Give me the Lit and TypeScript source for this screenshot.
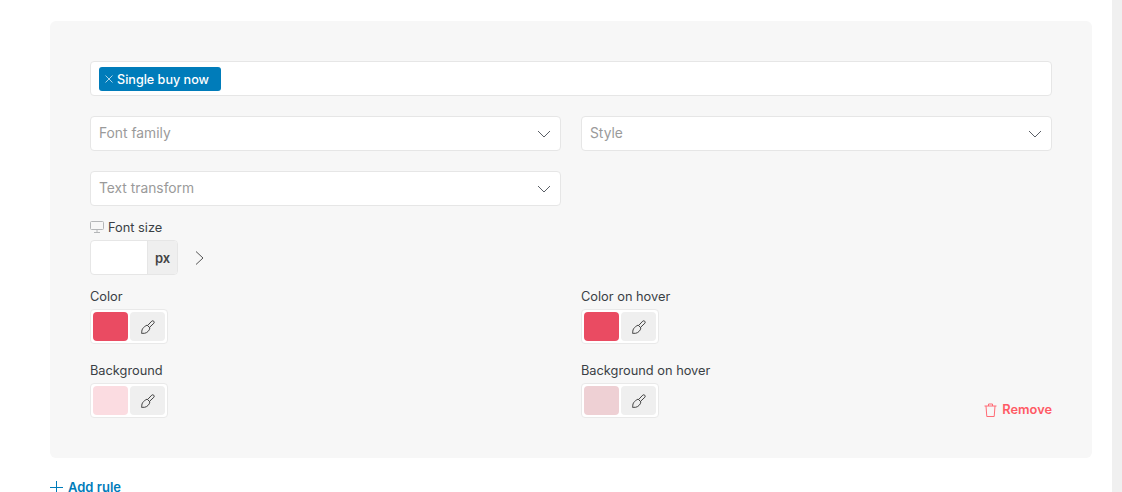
import { LitElement, html, css } from "lit";
import { customElement } from "lit/decorators.js";

const chevron = html`<svg class="chev" width="14" height="8" viewBox="0 0 14 8" fill="none"><path d="M1 1l6 6 6-6" stroke="#5a5f66" stroke-width="1"/></svg>`;
const brush = html`<svg width="16" height="16" viewBox="0 0 16 16" fill="none" stroke="#444" stroke-width="1"><path d="M7.600 6.500L11.800 2.100a1.500 1.500 0 0 1 2.100 2.100L9.500 8.400"/><path d="M7.100 6.100l2.800 2.800C9.600 11.500 7 14 4.500 14.300H1.500C2 12.800 1.500 11.500 2.600 9.700 3.500 8.300 5.500 6.800 7.100 6.100z"/></svg>`;

@customElement("app-root")
export class AppRoot extends LitElement {
  static styles = css`
    :host { display: block; width: 1122px; height: 492px; overflow: hidden; background: #fff; font-family: Inter, "Liberation Sans", sans-serif; font-size: 12.8px; color: #3a3f45; }
    .page { display: flex; height: 492px; }
    .main { flex: 1; padding: 21px 20px 0 50px; min-width: 0; }
    .track { width: 10px; background: #f0f0f0; }
    .panel { background: #f7f7f7; border-radius: 6px; padding: 40px; height: 437px; box-sizing: border-box; position: relative; }
    .field { height: 35px; box-sizing: border-box; background: #fff; border: 1px solid #e6e6e6; border-radius: 4px; display: flex; align-items: center; padding: 0 8px; }
    .tag { height: 24px; width: 122px; box-sizing: border-box; background: #007cba; color: #fff; border-radius: 3px; display: flex; align-items: center; gap: 4px; padding-left: 6px; font-weight: 500; font-size: 12.6px; white-space: nowrap; }
    .tag span { line-height: 18px; padding-top: 2px; }
    .grid { display: grid; grid-template-columns: 471px 471px; column-gap: 20px; row-gap: 20px; margin-top: 20px; }
    .select { justify-content: space-between; color: #9a9a9a; font-size: 13.8px; padding-right: 9px; }
    .select span { margin-top: -2px; }
    .size-label { display: flex; align-items: flex-start; gap: 4px; height: 14px; margin-top: 14px; line-height: 16px; }
    .size-label svg { margin-top: 1px; }
    .size-row { display: flex; align-items: center; margin-top: 6px; }
    .unit-input { width: 88px; height: 35px; box-sizing: border-box; display: flex; border: 1px solid #e6e6e6; border-radius: 4px; overflow: hidden; background: #fff; }
    .blank { flex: 1; }
    .unit { width: 30px; background: #efefef; border-left: 1px solid #e6e6e6; display: flex; align-items: center; justify-content: center; font-weight: 600; font-size: 13px; color: #444; box-sizing: border-box; }
    .next { margin-left: 17px; display: block; }
    .colors { display: grid; grid-template-columns: 471px 471px; column-gap: 20px; row-gap: 19px; margin-top: 14px; }
    .label { line-height: 16px; height: 14px; }
    .picker { margin-top: 6px; width: 78px; height: 35px; box-sizing: border-box; background: #fff; border: 1px solid #e9e9e9; border-radius: 4px; padding: 2px; display: flex; gap: 2px; }
    .swatch { width: 35px; border-radius: 4px; }
    .brush { width: 35px; border-radius: 4px; background: #efefef; display: flex; align-items: center; justify-content: center; }
    .remove { position: absolute; right: 40px; bottom: 40px; display: flex; align-items: center; gap: 5px; color: #ff5a65; font-weight: 600; font-size: 12.8px; line-height: 16px; }
    .add { display: flex; align-items: center; gap: 5px; margin-top: 20px; color: #007cba; font-weight: 600; font-size: 13px; line-height: 18px; }
  `;

  private picker(label: string, color: string) {
    return html`<div><div class="label">${label}</div><div class="picker"><div class="swatch" style="background:${color}"></div><div class="brush">${brush}</div></div></div>`;
  }

  render() {
    return html`<div class="page">
      <div class="main">
        <div class="panel">
          <div class="field"><div class="tag"><svg width="8" height="8" viewBox="0 0 8 8" fill="none" stroke="#a9d3e8" stroke-width="1"><path d="M.5.5l7 7M7.500.5l-7 7"/></svg><span>Single buy now</span></div></div>
          <div class="grid">
            <div class="field select"><span>Font family</span>${chevron}</div>
            <div class="field select"><span>Style</span>${chevron}</div>
            <div class="field select"><span>Text transform</span>${chevron}</div>
          </div>
          <div class="size-label"><svg width="14" height="12" viewBox="0 0 14 12" fill="none" stroke="#b4b6b8" stroke-width="1"><rect x=".5" y=".5" width="13" height="8" rx="1"/><path d="M7 9v2M4 11.500h6"/></svg><span>Font size</span></div>
          <div class="size-row">
            <div class="unit-input"><div class="blank"></div><div class="unit">px</div></div>
            <svg class="next" width="9" height="14" viewBox="0 0 9 14" fill="none" stroke="#555" stroke-width="1"><path d="M1 .5l7 6.500-7 6.500"/></svg>
          </div>
          <div class="colors">
            ${this.picker("Color", "#ea4b62")}
            ${this.picker("Color on hover", "#ea4b62")}
            ${this.picker("Background", "#fbdce1")}
            ${this.picker("Background on hover", "#eed0d4")}
          </div>
          <div class="remove"><svg width="13" height="14" viewBox="0 0 13 14" fill="none" stroke="#ff6b75" stroke-width="1"><path d="M.5 3h12M4.500 3V1h4v2M2 3l.8 10.500h7.400L11 3"/></svg><span>Remove</span></div>
        </div>
        <div class="add"><svg width="13" height="13" viewBox="0 0 13 13" fill="none" stroke="#007cba" stroke-width="1"><path d="M6.500 0v13M0 6.500h13"/></svg><span>Add rule</span></div>
      </div>
      <div class="track"></div>
    </div>`;
  }
}
